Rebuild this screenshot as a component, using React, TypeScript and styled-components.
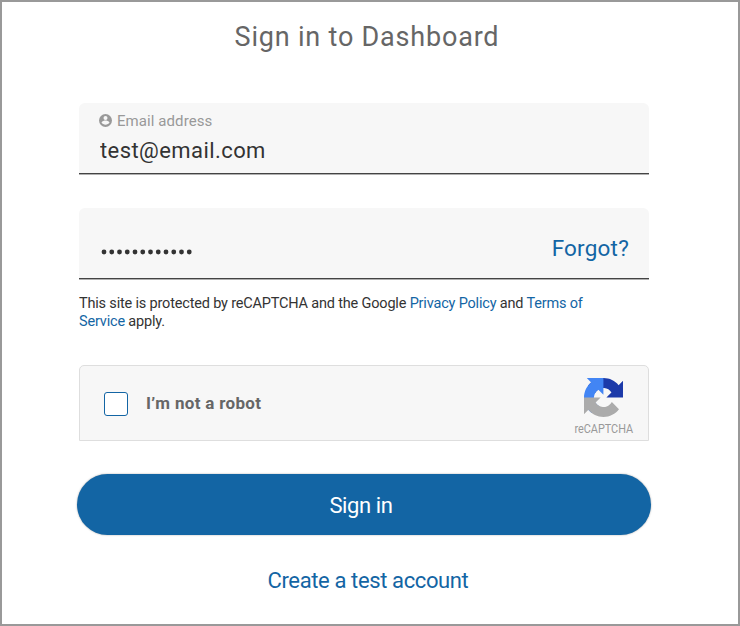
import React from "react";
import styled, { createGlobalStyle } from "styled-components";

const GlobalStyle = createGlobalStyle`
  *, *::before, *::after { box-sizing: border-box; }
  body { margin: 0; background: #fff; font-family: Roboto, "Liberation Sans", sans-serif; }
`;

const Frame = styled.main`
  display: flex;
  flex-direction: column;
  height: 626px;
  padding: 19px 89px 0 77px;
  border: 2px solid #999;
  background: #fff;
`;

const Title = styled.h1`
  margin: 0 0 50px;
  padding-left: 6px;
  height: 32px;
  font-size: 27px;
  line-height: 32px;
  font-weight: 400;
  letter-spacing: 0.8px;
  text-align: center;
  color: #666;
`;

const Field = styled.div<{ $gap?: number }>`
  display: flex;
  flex-direction: column;
  width: 570px;
  height: 72px;
  margin-bottom: ${(p) => p.$gap ?? 0}px;
  padding: 9px 20px 0;
  border-radius: 6px 6px 0 0;
  background: linear-gradient(#444 0 0) bottom 1px left / 100% 1px no-repeat,
    linear-gradient(#b0b0b0 0 0) bottom / 100% 1px no-repeat, #f7f7f7;
`;

const FieldLabel = styled.label`
  display: flex;
  align-items: center;
  gap: 5px;
  height: 18px;
  font-size: 15px;
  line-height: 18px;
  letter-spacing: 0.08px;
  color: #999;
`;

const FieldInput = styled.input`
  width: 300px;
  height: 30px;
  margin-top: 6px;
  padding: 0 0 0 1px;
  border: 0;
  outline: 0;
  background: transparent;
  font: 400 22px/30px Roboto, sans-serif;
  letter-spacing: 0.42px;
  color: #333;
`;

const PasswordRow = styled.div`
  display: flex;
  justify-content: space-between;
  align-items: center;
  height: 62px;
`;

const Dots = styled.svg`
  display: block;
  margin: 8px 0 0 2px;
`;

const TextLink = styled.a<{ $size?: number; $spacing?: number }>`
  color: #1365a4;
  text-decoration: none;
  font-size: ${(p) => (p.$size ? `${p.$size}px` : "inherit")};
  letter-spacing: ${(p) => (p.$spacing !== undefined ? `${p.$spacing}px` : "inherit")};
`;

const Notice = styled.p`
  width: 530px;
  height: 36px;
  margin: 0 0 34px;
  font-size: 14.5px;
  line-height: 17.5px;
  letter-spacing: -0.18px;
  color: #333;
`;

const Captcha = styled.section`
  display: flex;
  align-items: center;
  width: 570px;
  height: 76px;
  padding: 0 15px 0 24px;
  border: 1px solid #dedede;
  border-radius: 5px 5px 0 0;
  background: #f7f7f7;
`;

const Checkbox = styled.button`
  width: 24px;
  height: 24px;
  margin-top: 2px;
  padding: 0;
  border: 1px solid #1365a4;
  border-radius: 3px;
  background: #fff;
`;

const CaptchaLabel = styled.span`
  flex: 1;
  margin-left: 18px;
  font-size: 17px;
  line-height: 20px;
  font-weight: 700;
  letter-spacing: 0.32px;
  color: #666;
`;

const Brand = styled.div`
  display: flex;
  flex-direction: column;
  align-items: center;
  width: 59px;
  padding-top: 7px;
  gap: 5px;
`;

const BrandName = styled.span`
  font-size: 12.5px;
  line-height: 14px;
  transform: scaleX(0.87);
  color: #999;
`;

const SubmitButton = styled.button`
  width: 574px;
  height: 61px;
  margin: 33px 0 0 -2px;
  padding: 2px 6px 0 0;
  border: 0;
  border-radius: 31px;
  background: #1365a4;
  box-shadow: 0 0 2px rgba(0, 0, 0, 0.35);
  font: 400 22px/28px Roboto, sans-serif;
  letter-spacing: -0.4px;
  color: #fff;
`;

const Footer = styled.footer`
  margin-top: 32px;
  padding-left: 8px;
  height: 28px;
  line-height: 28px;
  text-align: center;
`;

const AccountGlyph = styled.svg`
  margin-top: -1px;
`;

const AccountIcon = () => (
  <AccountGlyph width="13" height="13" viewBox="0 0 13 13">
    <circle cx="6.5" cy="6.5" r="6.5" fill="#999" />
    <circle cx="6.5" cy="4.1" r="2" fill="#f7f7f7" />
    <path d="M2.5 8.4c.8-1.3 2.7-1.9 4-1.9s3.2.6 4 1.9A4.7 4.7 0 0 1 2.5 8.4Z" fill="#f7f7f7" />
  </AccountGlyph>
);

const CaptchaLogo = () => (
  <svg width="39" height="39" viewBox="0 0 64 64">
    <path fill="#1c3aa9" d="M64 31.955l-.033-1.37V4.687l-7.16 7.16C50.948 4.674 42.033.093 32.05.093c-10.4 0-19.622 4.96-25.458 12.64l11.736 11.86a15.55 15.55 0 0 1 4.754-5.334c2.05-1.6 4.952-2.906 8.968-2.906.485 0 .86.057 1.135.163 4.976.393 9.288 3.14 11.828 7.124l-8.307 8.307L64 31.953" />
    <path fill="#4285f4" d="M31.862.094l-1.37.033H4.594l7.16 7.16C4.58 13.147 0 22.06 0 32.046c0 10.4 4.96 19.622 12.64 25.458L24.5 45.768a15.55 15.55 0 0 1-5.334-4.754c-1.6-2.05-2.906-4.952-2.906-8.968 0-.485.057-.86.163-1.135.393-4.976 3.14-9.288 7.124-11.828l8.307 8.307L31.86.095" />
    <path fill="#ababab" d="M.001 32.045l.033 1.37v25.898l7.16-7.16c5.86 7.173 14.774 11.754 24.76 11.754 10.4 0 19.622-4.96 25.458-12.64l-11.736-11.86a15.55 15.55 0 0 1-4.754 5.334c-2.05 1.6-4.952 2.906-8.968 2.906-.485 0-.86-.057-1.135-.163-4.976-.393-9.288-3.14-11.828-7.124l8.307-8.307c-10.522.04-22.4.066-27.295-.005" />
  </svg>
);

export default function App() {
  return (
    <>
      <GlobalStyle />
      <Frame>
        <Title>Sign in to Dashboard</Title>
        <Field $gap={33}>
          <FieldLabel htmlFor="email">
            <AccountIcon />
            Email address
          </FieldLabel>
          <FieldInput id="email" defaultValue="test@email.com" spellCheck={false} />
        </Field>
        <Field $gap={15}>
          <PasswordRow>
            <Dots width="94" height="6" viewBox="0 0 94 6" role="img" aria-label="Password">
              {Array.from({ length: 12 }, (_, i) => (
                <circle key={i} cx={3 + i * 7.75} cy="3" r="2.4" fill="#333" />
              ))}
            </Dots>
            <TextLink href="#" $size={22.5} $spacing={0.2}>Forgot?</TextLink>
          </PasswordRow>
        </Field>
        <Notice>
          This site is protected by reCAPTCHA and the Google{" "}
          <TextLink href="#">Privacy Policy</TextLink> and{" "}
          <TextLink href="#">Terms of Service</TextLink> apply.
        </Notice>
        <Captcha>
          <Checkbox type="button" role="checkbox" aria-checked={false} aria-label="I’m not a robot" />
          <CaptchaLabel>I’m not a robot</CaptchaLabel>
          <Brand>
            <CaptchaLogo />
            <BrandName>reCAPTCHA</BrandName>
          </Brand>
        </Captcha>
        <SubmitButton type="button">Sign in</SubmitButton>
        <Footer>
          <TextLink href="#" $size={22} $spacing={-0.38}>Create a test account</TextLink>
        </Footer>
      </Frame>
    </>
  );
}
